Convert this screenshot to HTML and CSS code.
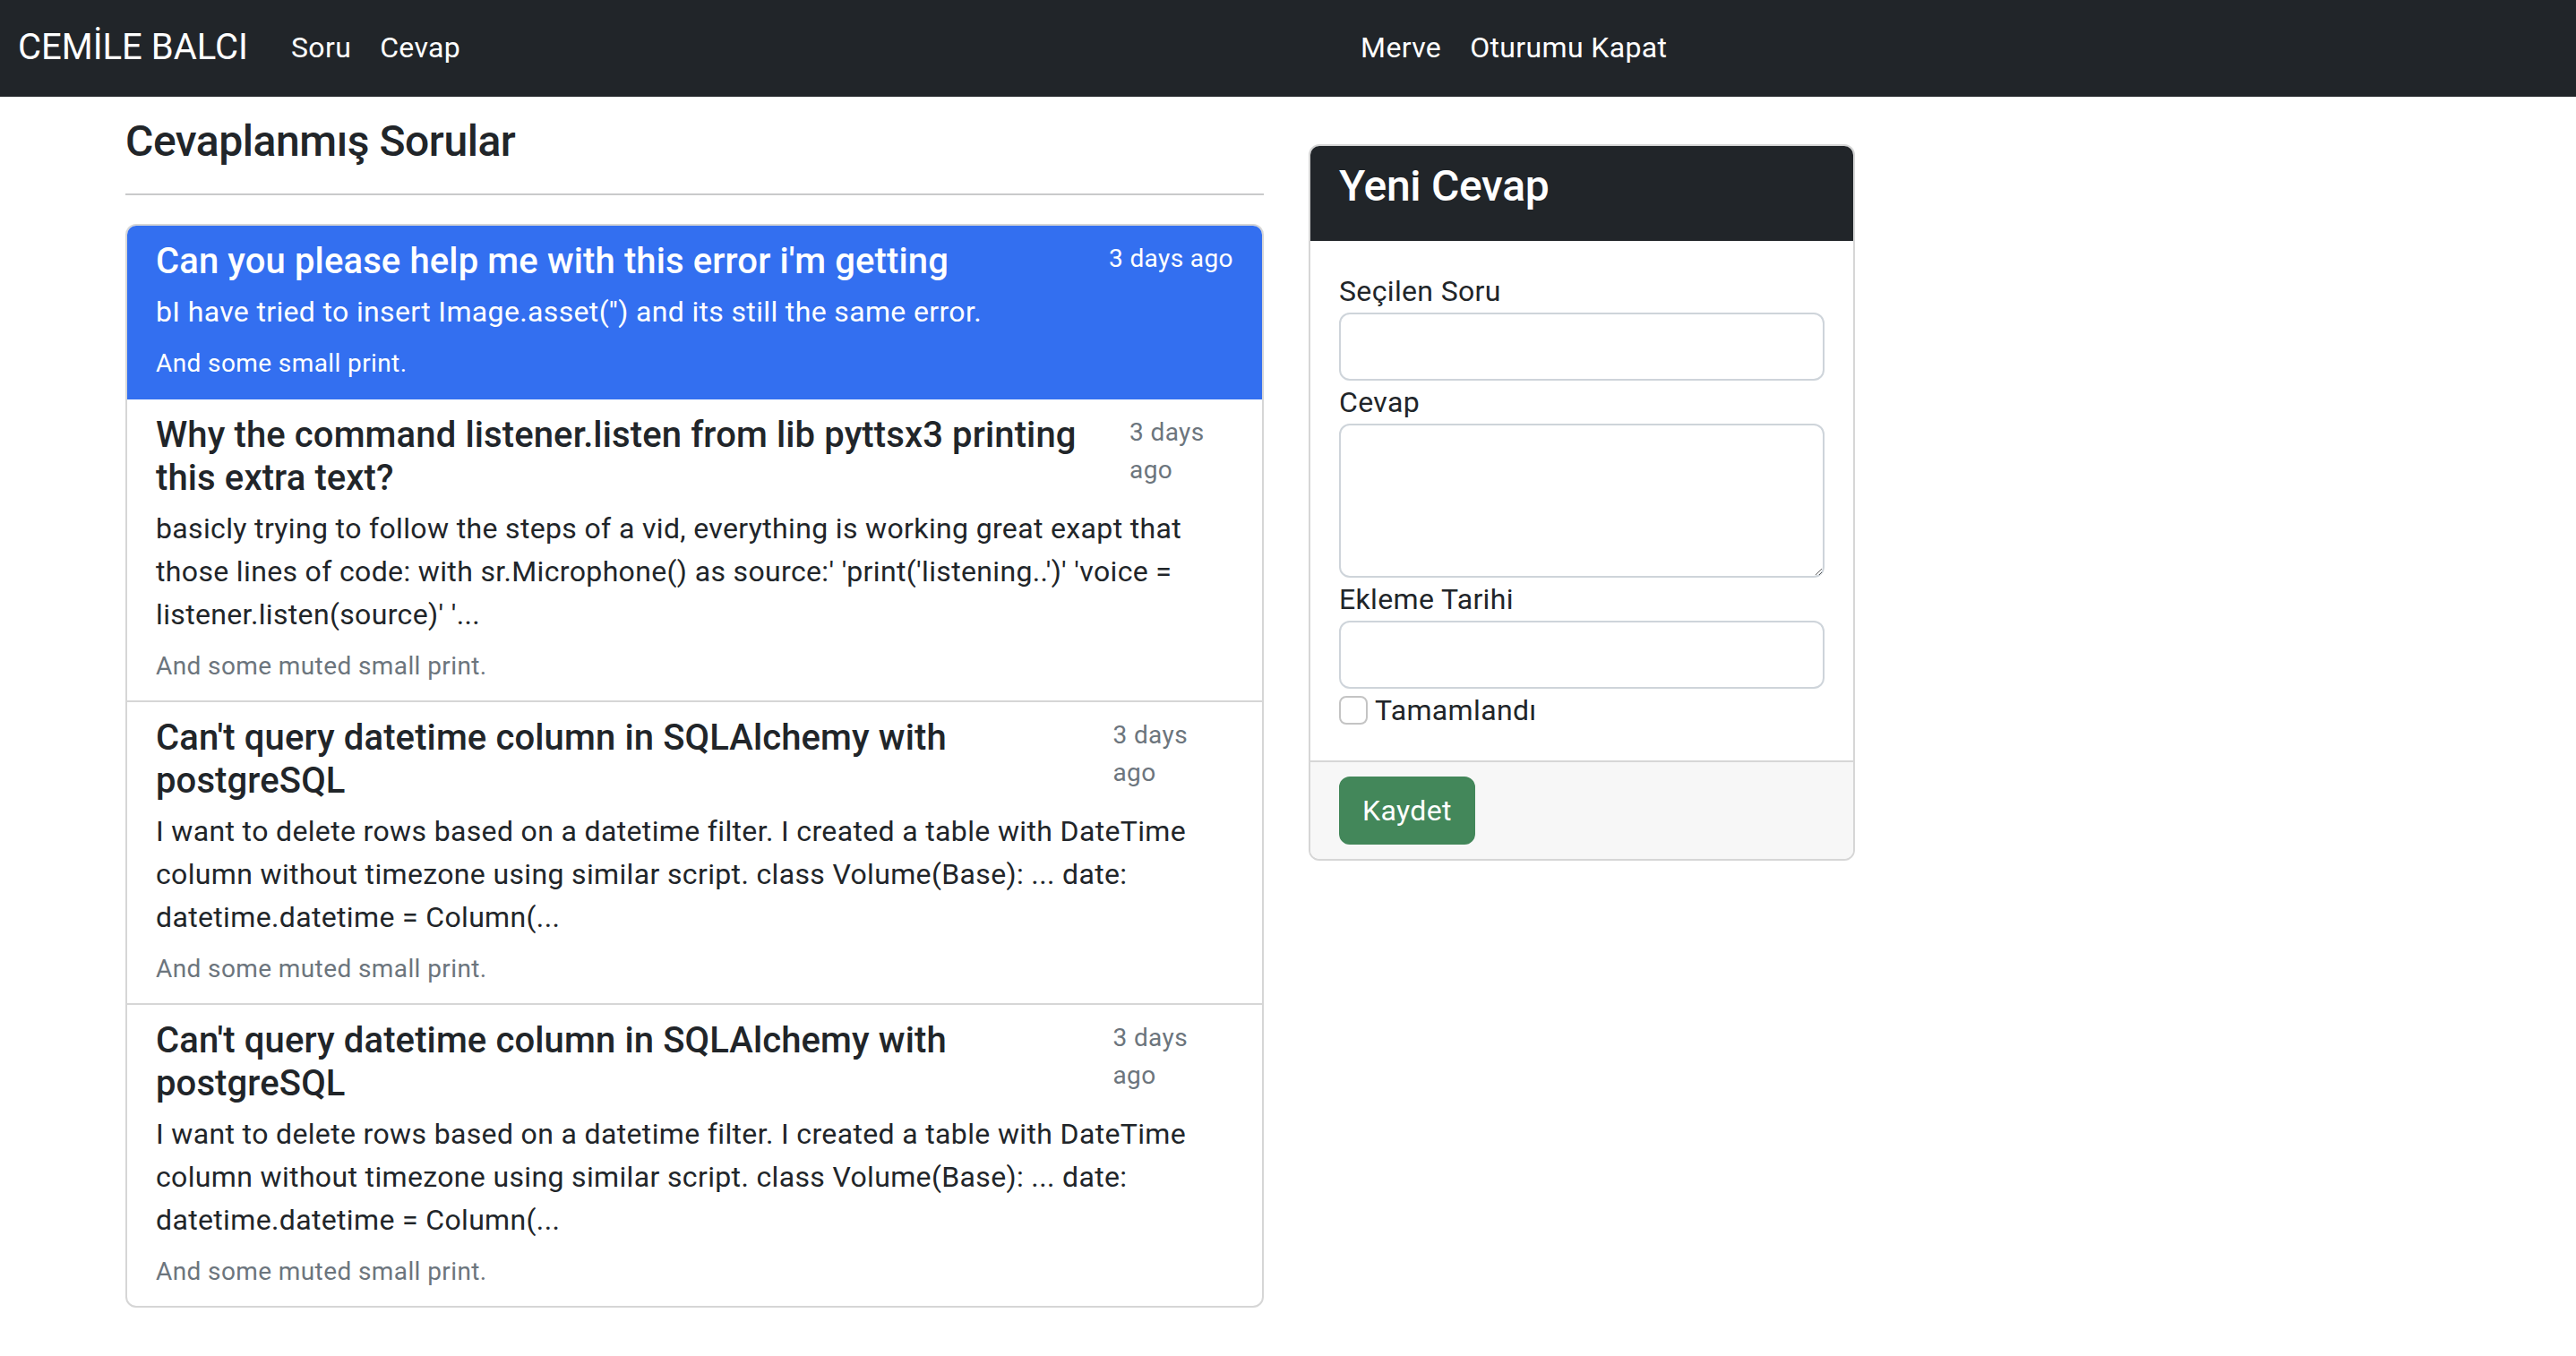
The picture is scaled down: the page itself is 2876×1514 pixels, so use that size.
FILE: index.html
```html
<!DOCTYPE html>
<html lang="tr">
<head>
<meta charset="utf-8">
<title>Cevaplanmış Sorular</title>
<link rel="stylesheet" href="styles.css">
</head>
<body>
<nav class="navbar">
  <a class="brand" href="#">CEMİLE BALCI</a>
  <ul class="nav">
    <li><a class="nav-link" href="#">Soru</a></li>
    <li><a class="nav-link" href="#">Cevap</a></li>
  </ul>
  <ul class="nav nav-user">
    <li><a class="nav-link" href="#">Merve</a></li>
    <li><a class="nav-link" href="#">Oturumu Kapat</a></li>
  </ul>
</nav>

<main class="page">
  <section class="answers">
    <h4 class="page-title">Cevaplanmış Sorular</h4>
    <hr class="divider">
    <div class="list-group">
      <a href="#" class="item active">
        <div class="item-head">
          <h5 class="item-title">Can you please help me with this error i'm getting</h5>
          <small class="item-date">3 days ago</small>
        </div>
        <p class="item-text">bI have tried to insert Image.asset('') and its still the same error.</p>
        <small class="item-note">And some small print.</small>
      </a>
      <a href="#" class="item">
        <div class="item-head">
          <h5 class="item-title">Why the command listener.listen from lib pyttsx3 printing this extra text?</h5>
          <small class="item-date">3 days ago</small>
        </div>
        <p class="item-text">basicly trying to follow the steps of a vid, everything is working great exapt that those lines of code: with sr.Microphone() as source:' 'print('listening..')' 'voice = listener.listen(source)' '...</p>
        <small class="item-note">And some muted small print.</small>
      </a>
      <a href="#" class="item">
        <div class="item-head">
          <h5 class="item-title">Can't query datetime column in SQLAlchemy with postgreSQL</h5>
          <small class="item-date">3 days ago</small>
        </div>
        <p class="item-text">I want to delete rows based on a datetime filter. I created a table with DateTime column without timezone using similar script. class Volume(Base): ... date: datetime.datetime = Column(...</p>
        <small class="item-note">And some muted small print.</small>
      </a>
      <a href="#" class="item">
        <div class="item-head">
          <h5 class="item-title">Can't query datetime column in SQLAlchemy with postgreSQL</h5>
          <small class="item-date">3 days ago</small>
        </div>
        <p class="item-text">I want to delete rows based on a datetime filter. I created a table with DateTime column without timezone using similar script. class Volume(Base): ... date: datetime.datetime = Column(...</p>
        <small class="item-note">And some muted small print.</small>
      </a>
    </div>
  </section>

  <aside class="card">
    <div class="card-header">
      <h4 class="card-title">Yeni Cevap</h4>
    </div>
    <form class="card-body">
      <label class="field-label" for="soru">Seçilen Soru</label>
      <input class="field" id="soru" type="text">
      <label class="field-label" for="cevap">Cevap</label>
      <textarea class="field field-area" id="cevap" rows="3"></textarea>
      <label class="field-label" for="tarih">Ekleme Tarihi</label>
      <input class="field" id="tarih" type="text">
      <div class="check-row">
        <input class="check" id="tamam" type="checkbox">
        <label class="check-label" for="tamam">Tamamlandı</label>
      </div>
    </form>
    <div class="card-footer">
      <button class="btn-save" type="button">Kaydet</button>
    </div>
  </aside>
</main>
</body>
</html>
```
FILE: styles.css
```css
* { box-sizing: border-box; }

html, body {
  margin: 0;
  background: #fff;
}

body {
  font-family: Roboto, "Liberation Sans", sans-serif;
  font-size: 32px;
  line-height: 48px;
  color: #212529;
  letter-spacing: 0.35px;
}

/* ---------- navbar ---------- */
.navbar {
  display: flex;
  align-items: center;
  height: 108px;
  padding: 0 0 3px 20px;
  background: #212529;
}

.brand {
  font-size: 40px;
  line-height: 60px;
  color: #fff;
  text-decoration: none;
  margin-right: 32px;
  letter-spacing: 0;
}

.nav {
  display: flex;
  list-style: none;
  margin: 0;
  padding: 0;
}

.nav-user {
  margin-left: 973px;
}

.nav-link {
  display: block;
  padding: 0 16px;
  font-size: 32px;
  line-height: 48px;
  color: #fff;
  text-decoration: none;
}

/* ---------- page ---------- */
.page {
  display: flex;
  align-items: flex-start;
  gap: 50px;
  padding-left: 140px;
}

.answers {
  width: 1271px;
  flex: none;
  padding-top: 21px;
}

.page-title {
  margin: 0;
  font-size: 48px;
  line-height: 57.6px;
  font-weight: 500;
  letter-spacing: -0.45px;
}

.divider {
  margin: 29px 0 32px;
  border: 0;
  border-top: 2px solid #c9cacb;
  height: 0;
}

/* ---------- list group ---------- */
.list-group {
  display: flex;
  flex-direction: column;
  border: 2px solid #d6d6d6;
  border-radius: 12px;
  overflow: hidden;
}

.item {
  display: block;
  padding: 16px 32px;
  color: #212529;
  text-decoration: none;
  border-top: 2px solid #d6d6d6;
}

.item:first-child {
  border-top: 0;
}

.item.active {
  background: #336ff0;
  color: #fff;
  margin: -2px -2px 0;
  padding: 18px 34px 18px;
}

.item.active + .item {
  border-top: 0;
}

.item-head {
  display: flex;
  justify-content: space-between;
  width: 100%;
}

.item-title {
  margin: 0 0 8px;
  font-size: 40px;
  line-height: 48px;
  font-weight: 500;
  letter-spacing: 0.12px;
}

.item-date {
  font-size: 28px;
  line-height: 42px;
  color: #6c757d;
  letter-spacing: 0.4px;
}

.item-text {
  margin: 0 0 8px;
}

.item-note {
  font-size: 28px;
  line-height: 42px;
  color: #6c757d;
  letter-spacing: 0.4px;
}

.item.active .item-date,
.item.active .item-note {
  color: #fff;
}

/* ---------- card ---------- */
.card {
  width: 610px;
  flex: none;
  margin-top: 53px;
  border: 2px solid #d6d6d6;
  border-radius: 12px;
  overflow: hidden;
  background: #fff;
}

.card-header {
  background: #212529;
  padding: 16px 32px;
}

.card-title {
  margin: 0 0 16px;
  font-size: 48px;
  line-height: 57.6px;
  font-weight: 500;
  color: #fff;
  letter-spacing: -0.3px;
}

.card-body {
  display: flex;
  flex-direction: column;
  padding: 32px;
  margin: 0;
}

.field-label {
  display: block;
}

.field {
  display: block;
  width: 100%;
  height: 76px;
  margin: 0;
  padding: 12px 24px;
  font: inherit;
  color: #212529;
  background: #fff;
  border: 2px solid #ced4da;
  border-radius: 12px;
  outline: none;
}

.field-area {
  height: 172px;
  resize: vertical;
}

.check-row {
  display: flex;
  align-items: center;
  gap: 8px;
  height: 48px;
}

.check {
  appearance: none;
  -webkit-appearance: none;
  width: 32px;
  height: 32px;
  margin: 0;
  border: 2px solid #c4c4c4;
  border-radius: 8px;
  background: #fff;
  flex: none;
}

.card-footer {
  padding: 16px 32px;
  background: #f7f7f7;
  border-top: 2px solid #d6d6d6;
}

.btn-save {
  display: inline-block;
  padding: 12px 24px;
  font: inherit;
  letter-spacing: 0.35px;
  color: #fff;
  background: #43875a;
  border: 2px solid #43875a;
  border-radius: 12px;
  cursor: pointer;
}
```
